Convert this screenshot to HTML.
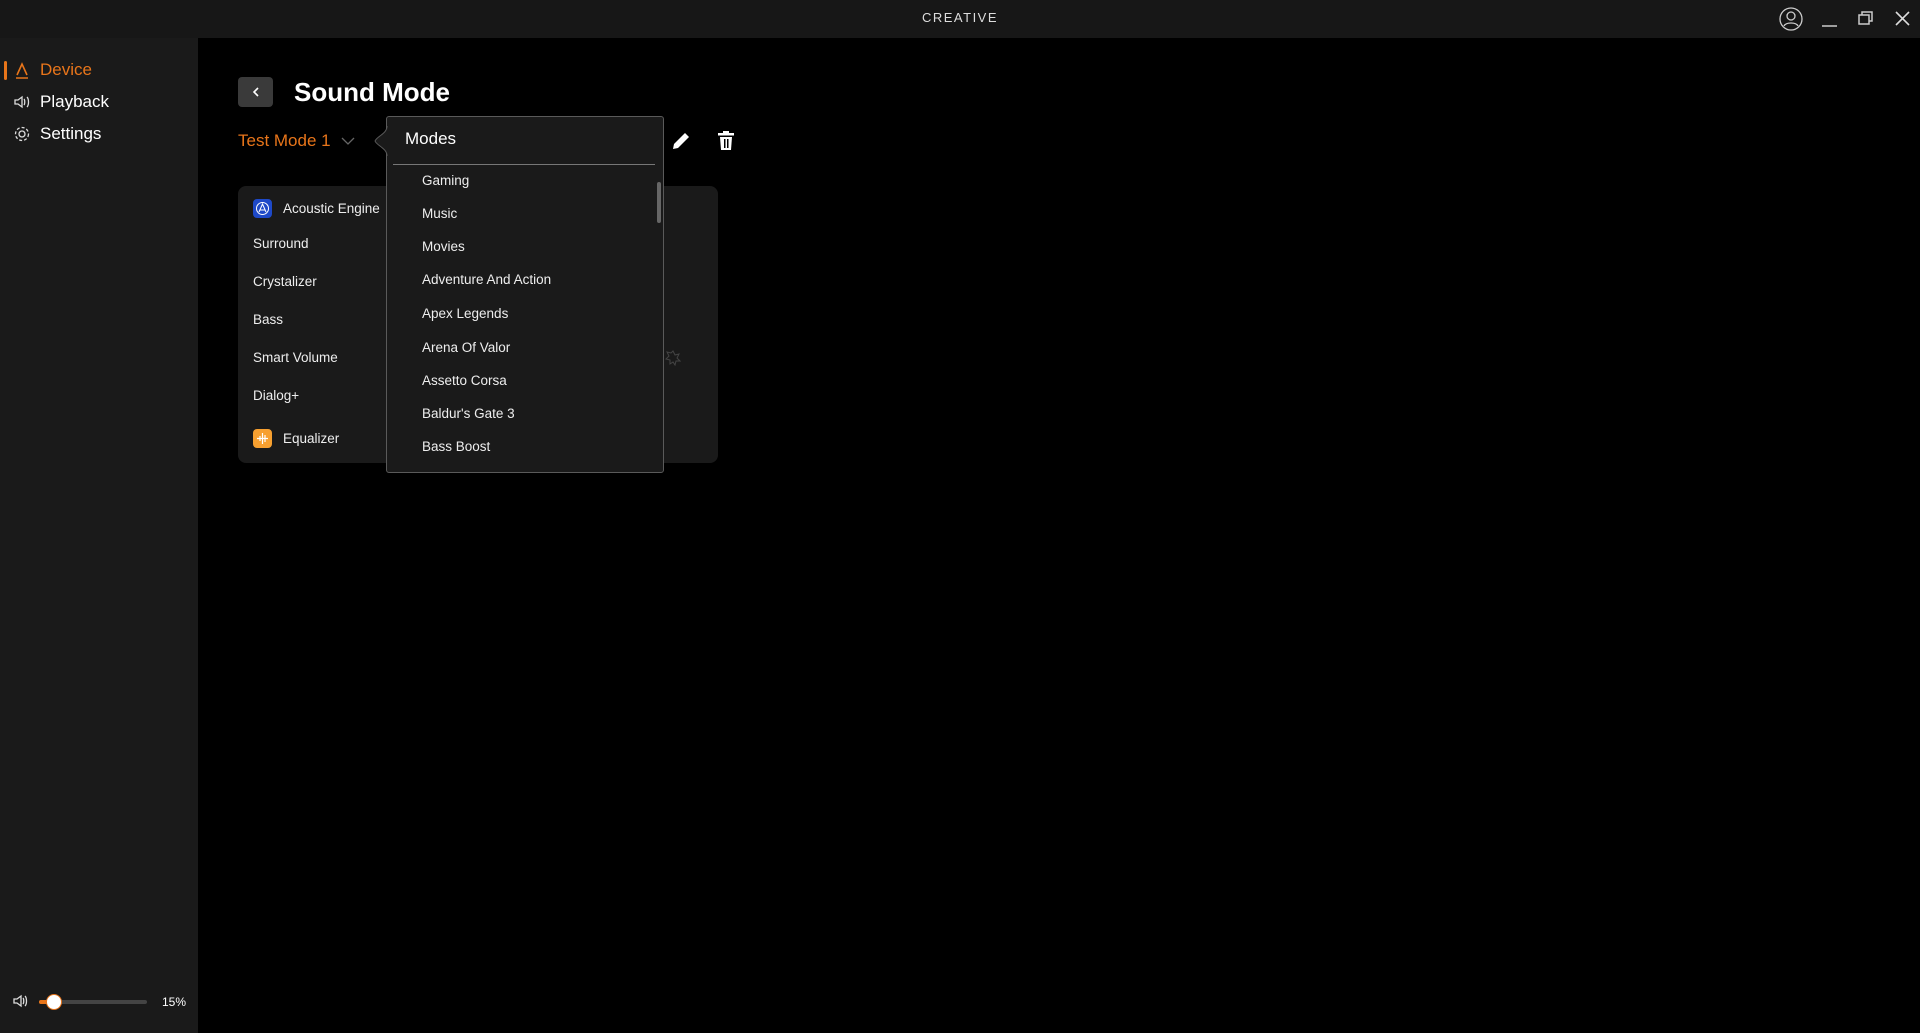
<!DOCTYPE html>
<html><head><meta charset="utf-8"><style>
*{box-sizing:border-box;margin:0;padding:0}
body{width:1920px;height:1033px;background:#000;font-family:"Liberation Sans",sans-serif;color:#fff;position:relative;overflow:hidden}
.abs{position:absolute}
.tb{left:0;top:0;width:1920px;height:38px;background:#171717}
.sb{left:0;top:38px;width:198px;height:995px;background:#1a1a1a}
.nav{font-size:17px;left:40px}
.card{left:238px;top:186px;width:480px;height:277px;background:#1a1a1a;border-radius:8px}
.ci{font-size:13.5px;color:#eee;left:253px}
.dd{left:386px;top:116px;width:278px;height:357px;background:#1a1a1a;border:1px solid #5a5a5a;border-radius:3px}
.mi{font-size:13.5px;color:#eee;left:422px}
</style></head><body>
<div class="abs tb"></div>
<div class="abs" style="left:0;width:1920px;top:10px;text-align:center;font-size:13px;letter-spacing:1.5px;color:#ddd">CREATIVE</div>
<svg class="abs" style="left:1778px;top:6px" width="26" height="26" viewBox="0 0 26 26" fill="none" stroke="#ccc" stroke-width="1.3"><circle cx="13" cy="13" r="11"/><circle cx="13" cy="10" r="4"/><path d="M6 20c2-4 12-4 14 0"/></svg>
<svg class="abs" style="left:1820px;top:10px" width="20" height="20" fill="none" stroke="#ccc" stroke-width="1.5"><path d="M2 16h15"/></svg>
<svg class="abs" style="left:1857px;top:9px" width="20" height="20" fill="none" stroke="#ccc" stroke-width="1.5"><rect x="2" y="6" width="10" height="9"/><path d="M5 6V3h10v9h-3"/></svg>
<svg class="abs" style="left:1893px;top:9px" width="20" height="20" fill="none" stroke="#ddd" stroke-width="1.6"><path d="M3 3l13 13M16 3L3 16"/></svg>

<div class="abs sb"></div>
<div class="abs" style="left:4px;top:61px;width:3px;height:19px;background:#e8751a;border-radius:2px"></div>
<svg class="abs" style="left:14px;top:62px" width="16" height="18" fill="none" stroke="#e8751a" stroke-width="1.6"><path d="M3 13L8 2l5 11M2 16h12"/></svg>
<div class="abs nav" style="top:60px;color:#e8751a">Device</div>
<svg class="abs" style="left:13px;top:94px" width="18" height="16" fill="none" stroke="#ddd" stroke-width="1.3"><path d="M2 6h3l4-3v10l-4-3H2z M11 5c1 1 1 5 0 6 M14 3c2 2 2 8 0 10"/></svg>
<div class="abs nav" style="top:92px">Playback</div>
<svg class="abs" style="left:13px;top:125px" width="18" height="18" fill="none" stroke="#ddd" stroke-width="1.3"><circle cx="9" cy="9" r="3"/><circle cx="9" cy="9" r="6.5" stroke-dasharray="3 2"/></svg>
<div class="abs nav" style="top:124px">Settings</div>

<svg class="abs" style="left:12px;top:993px" width="16" height="16" fill="none" stroke="#ddd" stroke-width="1.3"><path d="M2 6h3l4-3v10l-4-3H2z M11 5c1 1 1 5 0 6 M13 3c2 2 2 8 0 10"/></svg>
<div class="abs" style="left:39px;top:1000px;width:108px;height:4px;background:#444;border-radius:2px"></div>
<div class="abs" style="left:39px;top:1000px;width:16px;height:4px;background:#e8751a;border-radius:2px"></div>
<div class="abs" style="left:46px;top:994px;width:16px;height:16px;background:#fff;border:1.5px solid #e8751a;border-radius:50%"></div>
<div class="abs" style="left:162px;top:995px;font-size:12px">15%</div>

<div class="abs" style="left:238px;top:77px;width:35px;height:30px;background:#3a3a3a;border-radius:4px"></div>
<svg class="abs" style="left:249px;top:85px" width="14" height="14" fill="none" stroke="#fff" stroke-width="1.6"><path d="M9 3L5 7l4 4"/></svg>
<div class="abs" style="left:294px;top:77px;font-size:26px;font-weight:bold">Sound Mode</div>
<div class="abs" style="left:238px;top:131px;font-size:17px;color:#e8751a">Test Mode 1</div>
<svg class="abs" style="left:340px;top:134px" width="16" height="14" fill="none" stroke="#666" stroke-width="1.3"><path d="M2 4l6 6 6-6"/></svg>
<svg class="abs" style="left:670px;top:130px" width="22" height="22" fill="#fff"><path d="M3 19l1-5 11-11 4 4-11 11z"/></svg>
<svg class="abs" style="left:716px;top:130px" width="20" height="22" fill="#fff"><rect x="2" y="3" width="16" height="2.5"/><rect x="7" y="1" width="6" height="2"/><path d="M4 7h12l-1 13H5z"/><rect x="8" y="9" width="1.5" height="9" fill="#000"/><rect x="11" y="9" width="1.5" height="9" fill="#000"/></svg>

<div class="abs card"></div>
<div class="abs" style="left:253px;top:199px;width:19px;height:19px;background:#1e49c8;border-radius:4px"></div>
<svg class="abs" style="left:254px;top:200px" width="17" height="17" fill="none" stroke="#fff" stroke-width="1"><circle cx="8.5" cy="8.5" r="6"/><path d="M5 12l3.5-8 3.5 8M6 10h5"/></svg>
<div class="abs ci" style="left:283px;top:201px">Acoustic Engine</div>
<div class="abs ci" style="top:236px">Surround</div>
<div class="abs ci" style="top:274px">Crystalizer</div>
<div class="abs ci" style="top:312px">Bass</div>
<div class="abs ci" style="top:350px">Smart Volume</div>
<div class="abs ci" style="top:388px">Dialog+</div>
<div class="abs" style="left:253px;top:429px;width:19px;height:19px;background:#f7a030;border-radius:4px"></div>
<svg class="abs" style="left:253px;top:429px" width="19" height="19" fill="none" stroke="#fff" stroke-width="1.2"><path d="M4 9.5h11M7 7v5M9.5 4v11M12 6v7"/></svg>
<div class="abs ci" style="left:283px;top:431px">Equalizer</div>
<svg class="abs" style="left:665px;top:350px" width="16" height="16" fill="none" stroke="#444" stroke-width="1"><path d="M8 1l2 4 4-1-2 4 3 3-4 0-1 4-2-3-3 2 0-4-4-1 3-3-2-4 4 1z"/></svg>

<div class="abs dd"></div>
<svg class="abs" style="left:373px;top:126px" width="15" height="30"><path d="M14 0 C14 8 4 10 2 15 C4 20 14 22 14 30" fill="#1a1a1a" stroke="#5a5a5a" stroke-width="1"/></svg>
<div class="abs" style="left:405px;top:129px;font-size:17px">Modes</div>
<div class="abs" style="left:393px;top:164px;width:262px;height:1px;background:#777"></div>
<div class="abs" style="left:657px;top:182px;width:4px;height:41px;background:#666;border-radius:2px"></div>
<div class="abs mi" style="top:173px">Gaming</div>
<div class="abs mi" style="top:206px">Music</div>
<div class="abs mi" style="top:239px">Movies</div>
<div class="abs mi" style="top:272px">Adventure And Action</div>
<div class="abs mi" style="top:306px">Apex Legends</div>
<div class="abs mi" style="top:340px">Arena Of Valor</div>
<div class="abs mi" style="top:373px">Assetto Corsa</div>
<div class="abs mi" style="top:406px">Baldur's Gate 3</div>
<div class="abs mi" style="top:439px">Bass Boost</div>
</body></html>
